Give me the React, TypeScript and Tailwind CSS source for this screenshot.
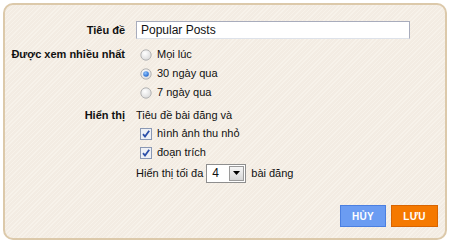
import React from 'react'

const font = { fontFamily: "'Liberation Sans', Arial, sans-serif" }

function Radio({ checked }: { checked?: boolean }) {
  return (
    <svg width="12" height="12" viewBox="0 0 12 12" className="shrink-0">
      <defs>
        <radialGradient id="rg" cx="0.4" cy="0.35" r="0.7">
          <stop offset="0" stopColor="#ffffff" />
          <stop offset="1" stopColor="#d8d8d8" />
        </radialGradient>
        <radialGradient id="dot" cx="0.4" cy="0.35" r="0.7">
          <stop offset="0" stopColor="#8fc4ff" />
          <stop offset="1" stopColor="#1a5fc8" />
        </radialGradient>
      </defs>
      <circle cx="6" cy="6" r="5.2" fill="url(#rg)" stroke="#b4b4b4" strokeWidth="1" />
      {checked && <circle cx="6" cy="6" r="2.8" fill="url(#dot)" />}
    </svg>
  )
}

function Check() {
  return (
    <svg width="12" height="12" viewBox="0 0 12 12" className="shrink-0">
      <rect x="0.5" y="0.5" width="11" height="11" fill="#eef0f5" stroke="#8a98b4" />
      <path d="M3 6.2 L5 8.6 L9.2 2.8" fill="none" stroke="#2c4fa8" strokeWidth="1.8" />
    </svg>
  )
}

export default function App() {
  return (
    <div className="w-[453px] h-[248px] bg-white p-[3px] text-[11px] text-[#111]" style={font}>
      <div className="w-[444px] h-[237px] rounded-[10px] border-2 border-[#dcc9aa] bg-[#f3ece3] bg-[repeating-linear-gradient(135deg,#f3ece3_0px,#f3ece3_2px,#f7f2ea_2px,#f7f2ea_3px)] pt-[16px] flex flex-col">
        <div className="flex items-center h-[18px]">
          <div className="w-[120px] text-right font-bold">Tiêu đề</div>
          <div className="ml-[11px] w-[274px] h-[18px] bg-white border border-[#a8acbc] border-b-[#dde2ea] flex items-center pl-[4px] text-[12px]">
            Popular Posts
          </div>
        </div>

        <div className="flex mt-[6px]">
          <div className="w-[120px] text-right font-bold h-[19px] leading-[19px]">Được xem nhiều nhất</div>
          <div className="ml-[15px] flex flex-col">
            {['Mọi lúc', '30 ngày qua', '7 ngày qua'].map((t, i) => (
              <div key={t} className="flex items-center h-[19px] gap-[5px]">
                <Radio checked={i === 1} />
                <span>{t}</span>
              </div>
            ))}
          </div>
        </div>

        <div className="flex mt-[4px]">
          <div className="w-[120px] text-right font-bold h-[18px] leading-[18px]">Hiển thị</div>
          <div className="ml-[11px] flex flex-col">
            <div className="h-[18px] leading-[18px]">Tiêu đề bài đăng và</div>
            <div className="flex items-center h-[19px] gap-[5px] ml-[4px]">
              <Check />
              <span>hình ảnh thu nhỏ</span>
            </div>
            <div className="flex items-center h-[19px] gap-[5px] ml-[4px]">
              <Check />
              <span>đoạn trích</span>
            </div>
            <div className="flex items-center h-[20px] mt-[1px]">
              <span>Hiển thị tối đa</span>
              <div className="ml-[3px] w-[40px] h-[19px] bg-white border border-[#8e8e8e] flex items-center justify-between pl-[5px] pr-[1px] text-[12px]">
                <span>4</span>
                <div className="w-[15px] h-[15px] border border-[#9a9a9a] bg-[linear-gradient(#f6f6f6,#d6d6d6)] flex items-center justify-center">
                  <svg width="7" height="4" viewBox="0 0 7 4">
                    <path d="M0 0 H7 L3.5 4 Z" fill="#000" />
                  </svg>
                </div>
              </div>
              <span className="ml-[5px]">bài đăng</span>
            </div>
          </div>
        </div>

        <div className="flex justify-end gap-[5px] mt-[22px] pr-[7px]">
          <button className="w-[46px] h-[22px] bg-[#6b9cf2] border border-[#4b7fe0] text-white font-bold text-[10px] tracking-wide">
            HỦY
          </button>
          <button className="w-[47px] h-[22px] bg-[#f57900] border border-[#d86400] text-white font-bold text-[10px] tracking-wide">
            LƯU
          </button>
        </div>
      </div>
    </div>
  )
}
